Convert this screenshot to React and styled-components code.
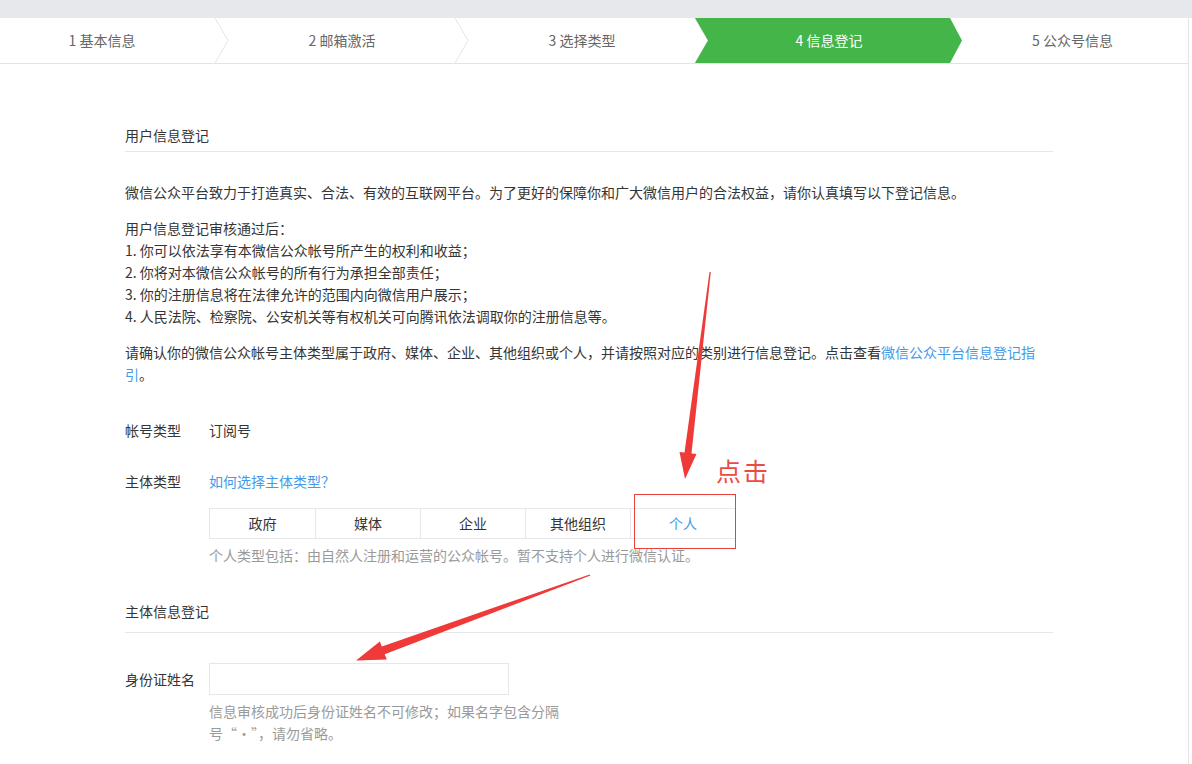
import React from 'react';
import styled, { createGlobalStyle } from 'styled-components';

const GlobalStyle = createGlobalStyle`
  html, body {
    margin: 0;
    padding: 0;
    background: #ffffff;
  }
  body {
    font-family: "Noto Sans CJK SC", "Liberation Sans", sans-serif;
    font-size: 14px;
    color: #353535;
  }
  * {
    box-sizing: border-box;
  }
`;

const Page = styled.div`
  position: relative;
  width: 1192px;
  min-height: 764px;
  overflow: hidden;
`;

const TopBand = styled.div`
  height: 18px;
  background: #e7e8eb;
`;

const Main = styled.div`
  width: 1189px;
  min-height: 746px;
  border-right: 1px solid #e4e4e4;
  background: #fff;
`;

const StepBar = styled.div`
  display: flex;
  height: 46px;
  border-bottom: 1px solid #e4e4e4;
`;

const Step = styled.div`
  position: relative;
  flex: 0 0 ${p => p.$w}px;
  display: flex;
  align-items: center;
  justify-content: center;
  padding-right: ${p => p.$shift || 0}px;
  color: ${p => (p.$active ? '#fff' : '#666')};
  line-height: 45px;
  z-index: ${p => (p.$active ? 1 : 0)};

  &::before {
    content: '';
    display: ${p => (p.$active ? 'block' : 'none')};
    position: absolute;
    top: 0;
    bottom: 0;
    left: -7px;
    right: -6px;
    background: #44b549;
    clip-path: polygon(0 0, calc(100% - 12px) 0, 100% 50%, calc(100% - 12px) 100%, 0 100%, 13px 50%);
  }
`;

const StepText = styled.span`
  position: relative;
`;

const Chevron = styled.svg`
  position: absolute;
  top: 0;
  right: -7px;
  width: 14px;
  height: 45px;
`;

const Content = styled.div`
  width: 1053px;
  padding: 60px 0 40px 125px;
  line-height: 22px;
`;

const SectionTitle = styled.div`
  margin-top: ${p => p.$top || 0}px;
  padding-bottom: ${p => p.$pad}px;
  border-bottom: 1px solid #e7e7eb;
  color: #353535;
`;

const Para = styled.p`
  margin: ${p => p.$top}px 0 0;
`;

const Link = styled.a`
  color: #459ae9;
  text-decoration: none;
  cursor: pointer;
`;

const Row = styled.div`
  display: grid;
  grid-template-columns: 84px 1fr;
  margin-top: ${p => p.$top}px;
`;

const Label = styled.div`
  color: #353535;
  line-height: ${p => p.$lh || 22}px;
`;

const Value = styled.div`
  color: #353535;
`;

const OptionGroup = styled.div`
  display: grid;
  grid-template-columns: repeat(5, 105px);
  width: 527px;
  margin-top: 16px;
  border: 1px solid #e7e7eb;
`;

const Option = styled.div`
  height: 29px;
  line-height: 29px;
  text-align: center;
  color: ${p => (p.$selected ? '#459ae9' : '#353535')};
  border-left: ${p => (p.$first ? 'none' : '1px solid #e7e7eb')};
  cursor: pointer;
`;

const Hint = styled.div`
  margin-top: ${p => p.$top}px;
  color: #9a9a9a;
  width: ${p => p.$w || 'auto'};
`;

const Input = styled.input`
  display: block;
  width: 300px;
  height: 32px;
  border: 1px solid #e7e7eb;
  padding: 0 10px;
  outline: none;
  font-family: inherit;
  font-size: 14px;
`;

const Overlay = styled.div`
  position: absolute;
  inset: 0;
  pointer-events: none;
`;

const MarkBox = styled.div`
  position: absolute;
  left: 634px;
  top: 494px;
  width: 102px;
  height: 55px;
  border: 1px solid #e8403b;
`;

const MarkText = styled.div`
  position: absolute;
  left: 716px;
  top: 454px;
  font-size: 25px;
  line-height: 32px;
  color: #ee4a44;
  letter-spacing: 2px;
`;

const steps = [
  { label: '1 基本信息', w: 222, shift: 18 },
  { label: '2 邮箱激活', w: 240 },
  { label: '3 选择类型', w: 240 },
  { label: '4 信息登记', w: 254, active: true },
  { label: '5 公众号信息', w: 233, last: true }
];

const types = ['政府', '媒体', '企业', '其他组织', '个人'];

const App = () => {
  return (
    <Page>
      <GlobalStyle />
      <TopBand />
      <Main>
        <StepBar>
          {steps.map(s => (
            <Step key={s.label} $w={s.w} $shift={s.shift} $active={s.active}>
              <StepText>{s.label}</StepText>
              {!s.last && !s.active && (
                <Chevron viewBox="0 0 14 45">
                  <polyline points="0,0 13,22.5 0,45" fill="none" stroke="#e4e4e4" strokeWidth="1" />
                </Chevron>
              )}
            </Step>
          ))}
        </StepBar>

        <Content>
          <SectionTitle $pad={5}>用户信息登记</SectionTitle>
          <Para $top={29}>
            微信公众平台致力于打造真实、合法、有效的互联网平台。为了更好的保障你和广大微信用户的合法权益，请你认真填写以下登记信息。
          </Para>
          <Para $top={14}>
            用户信息登记审核通过后：
            <br />
            1. 你可以依法享有本微信公众帐号所产生的权利和收益；
            <br />
            2. 你将对本微信公众帐号的所有行为承担全部责任；
            <br />
            3. 你的注册信息将在法律允许的范围内向微信用户展示；
            <br />
            4. 人民法院、检察院、公安机关等有权机关可向腾讯依法调取你的注册信息等。
          </Para>
          <Para $top={14}>
            请确认你的微信公众帐号主体类型属于政府、媒体、企业、其他组织或个人，并请按照对应的类别进行信息登记。点击查看
            <Link>微信公众平台信息登记指引</Link>。
          </Para>

          <Row $top={34}>
            <Label>帐号类型</Label>
            <Value>订阅号</Value>
          </Row>

          <Row $top={29}>
            <Label>主体类型</Label>
            <div>
              <Link>如何选择主体类型？</Link>
              <OptionGroup>
                {types.map((t, i) => (
                  <Option key={t} $first={i === 0} $selected={t === '个人'}>
                    {t}
                  </Option>
                ))}
              </OptionGroup>
              <Hint $top={5}>个人类型包括：由自然人注册和运营的公众帐号。暂不支持个人进行微信认证。</Hint>
            </div>
          </Row>

          <SectionTitle $top={34} $pad={10}>主体信息登记</SectionTitle>

          <Row $top={30}>
            <Label $lh={32}>身份证姓名</Label>
            <div>
              <Input type="text" />
              <Hint $top={5} $w="352px">
                信息审核成功后身份证姓名不可修改；如果名字包含分隔号“·”，请勿省略。
              </Hint>
            </div>
          </Row>
        </Content>
      </Main>

      <Overlay>
        <svg width="1192" height="764" viewBox="0 0 1192 764">
          <polygon
            points="709.5,272 684.5,452.6 679.5,452 685,479 696.5,454 691.5,453.4 710.8,272"
            fill="#f03a3a"
          />
          <polygon
            points="590.4,575.6 384.7,654.2 386.8,659.5 356,660.5 379.8,641.5 381.9,646.6 589.6,574.4"
            fill="#f03a3a"
          />
        </svg>
        <MarkBox />
        <MarkText>点击</MarkText>
      </Overlay>
    </Page>
  );
};

export default App;
